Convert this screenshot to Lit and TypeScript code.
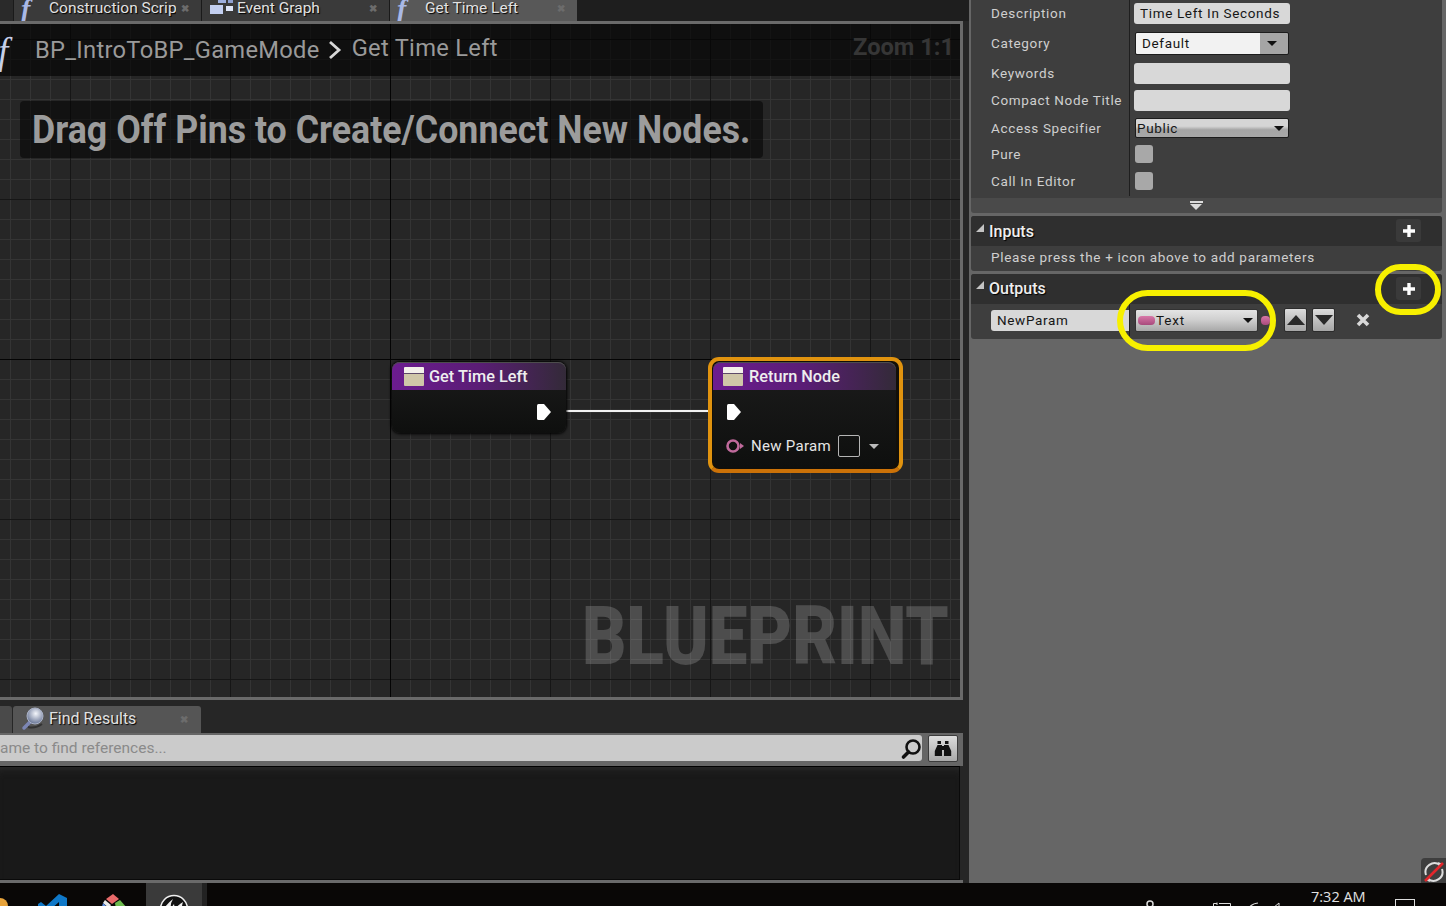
import { LitElement, html, css, svg } from 'lit';
import { customElement } from 'lit/decorators.js';

// little svg pieces, all drawn by hand
const graphIcon = svg`<svg class="tab-ico" width="24" height="18" viewBox="0 0 24 18">
  <rect x="8" y="0" width="8" height="5" fill="#9fb0de"/><rect x="18" y="0" width="5" height="5" fill="#8fa0d0"/>
  <rect x="0" y="7" width="13" height="9" fill="#c3cff0"/><rect x="16" y="8" width="7" height="5" fill="#dfe6f8"/></svg>`;

const lens = svg`<svg class="tab-ico" width="24" height="24" viewBox="0 0 24 24">
  <defs><radialGradient id="lg" cx="0.55" cy="0.35" r="0.7"><stop offset="0" stop-color="#f4f6fb"/><stop offset="1" stop-color="#5d6b8e"/></radialGradient></defs>
  <path d="M9 15 L3 21" stroke="#7c86b4" stroke-width="3.5" stroke-linecap="round"/>
  <circle cx="14" cy="9" r="8" fill="url(#lg)" stroke="#aab2c6" stroke-width="1"/>
  <path d="M7 20 Q14 22 21 17" stroke="#1c1c1c" stroke-width="2" fill="none" opacity=".6"/></svg>`;

const searchGlass = svg`<svg width="22" height="22" viewBox="0 0 22 22">
  <circle cx="13" cy="9" r="6.5" fill="none" stroke="#111" stroke-width="2.6"/>
  <path d="M8.5 14 L3.5 19" stroke="#111" stroke-width="3.6" stroke-linecap="round"/></svg>`;

const binoculars = svg`<svg width="18" height="18" viewBox="0 0 18 18" fill="#111">
  <rect x="3.5" y="1" width="3.5" height="3"/><rect x="11" y="1" width="3.5" height="3"/>
  <path d="M3.5 5 H8 V16 H0.8 V11 Z"/><path d="M10 5 H14.5 L17.2 11 V16 H10 Z"/><rect x="8" y="6" width="2" height="4"/></svg>`;

const execPin = svg`<svg class="pin" width="16" height="18" viewBox="0 0 16 18">
  <path d="M2.5 1 H8 L15 9 L8 17 H2.5 Q1 17 1 15.5 V2.500 Q1 1 2.500 1 Z" fill="#fff"/></svg>`;

const paramPin = svg`<svg width="20" height="16" viewBox="0 0 20 16">
  <circle cx="8" cy="8" r="5.500" fill="none" stroke="#c06a9c" stroke-width="2.600"/>
  <path d="M15 5 L19 8 L15 11 Z" fill="#c06a9c"/></svg>`;

const ueLogo = svg`<svg width="30" height="30" viewBox="0 0 30 30">
  <circle cx="15" cy="15" r="13.500" fill="#111" stroke="#eee" stroke-width="1.600"/>
  <path d="M6 13 Q10 8 14 5 Q11 10 12 14 L15 10 L16 15 Q20 10 24 8 Q22 14 23 20 L18 24 Q10 24 6 13 Z" fill="#eee"/></svg>`;

const vsCode = svg`<svg width="30" height="30" viewBox="0 0 30 30">
  <path d="M21 0 L29 4 V26 L21 30 L8 18 L3 22 L0 20 V10 L3 8 L8 12 Z M21 8 L13 15 L21 22 Z" fill="#0f78c8" fill-rule="evenodd"/></svg>`;

const pencil = svg`<svg width="28" height="30" viewBox="0 0 28 30">
  <path d="M6 5 L13 0 L19 5 L12 10 Z" fill="#e86a6a"/><path d="M5 6 L11 11 L9 14 L3 9 Z" fill="#e8e8e8"/>
  <path d="M15 9 L20 6 L27 14 L18 26 Z" fill="#6dbb4f"/><path d="M3 9 L9 15 L4 26 L0 20 Z" fill="#5b8ee6"/></svg>`;

const syncOff = svg`<svg width="24" height="24" viewBox="0 0 24 24">
  <path d="M4 15 A9 9 0 0 1 18 5" fill="none" stroke="#ddd" stroke-width="2"/><path d="M20 9 A9 9 0 0 1 6 19" fill="none" stroke="#ddd" stroke-width="2"/>
  <path d="M16 2 L21 4 L17 8 Z" fill="#ddd"/><path d="M8 22 L3 20 L7 16 Z" fill="#ddd"/>
  <path d="M3 21 L21 3" stroke="#e2262b" stroke-width="2.600"/></svg>`;

const trayPerson = svg`<svg width="14" height="12" viewBox="0 0 14 12"><circle cx="7" cy="5" r="3" fill="none" stroke="#ddd" stroke-width="1.500"/><path d="M1 12 Q7 5 13 12" fill="none" stroke="#ddd"/></svg>`;
const trayPower = svg`<svg width="18" height="8" viewBox="0 0 18 8"><path d="M0.500 8 V1.500 H4 M4 0.500 V3 M6 1.500 H17.500 V8" fill="none" stroke="#ddd"/></svg>`;
const trayWifi = svg`<svg width="12" height="8" viewBox="0 0 12 8"><path d="M1 8 Q3 2 11 1" fill="none" stroke="#ddd" stroke-width="1.200"/></svg>`;
const traySound = svg`<svg width="18" height="8" viewBox="0 0 18 8"><path d="M0 6 L6 1 V8" fill="none" stroke="#ddd"/><path d="M9 4 L11 8 M14 4 L16 8" stroke="#ddd"/></svg>`;

const plusIcon = svg`<svg width="14" height="14" viewBox="0 0 14 14"><path d="M7 1 V13 M1 7 H13" stroke="#fff" stroke-width="3.400"/></svg>`;

@customElement('app-root')
export class AppRoot extends LitElement {
  static styles = css`
    :host {
      display: block;
      width: 1446px;
      height: 906px;
      overflow: hidden;
      background: #262626;
      font-family: Roboto, "Liberation Sans", sans-serif;
    }
    .editor { display: flex; height: 883px; }
    .left { width: 969px; flex: none; display: flex; flex-direction: column; background: #262626; }

    /* document tabs */
    .doc-tabs { display: flex; height: 21px; padding-left: 13px; background: #2a2a2a; overflow: hidden; flex: none; }
    .doc-tabs .tail { flex: 1; background: #1e1e1e; }
    .tab {
      position: relative; width: 188px; flex: none; display: flex; align-items: center;
      background: #3a3a3a; border-left: 1px solid #1a1a1a; box-sizing: border-box;
      color: #e2e2e2; font-size: 15.500px; text-shadow: 1px 1px 1px #000; white-space: nowrap;
    }
    .tab.on { background: #585858; }
    .tab .lbl { margin-left: 35px; width: 127px; overflow: hidden; margin-top: -6px; flex: none; }
    .fn {
      position: absolute; left: 7px; top: -7px; font: italic 700 28px "Liberation Serif", serif;
      color: #a9b8e6; text-shadow: none;
    }
    .tab-ico { position: absolute; left: 8px; top: -2px; }
    .tab .x { color: #6c6c6c; font-size: 10px; font-weight: 700; margin: -5px 0 0 5px; text-shadow: none; }

    /* graph canvas */
    .graph {
      position: relative; height: 679px; margin-right: 6px; flex: none; box-sizing: border-box;
      border: solid #6a6a6a; border-width: 3px 3px 3px 0;
      background-color: #262626;
      overflow: hidden;
    }
    .lines { position: absolute; inset: 0; background-repeat: repeat; }
    .minor {
      background-image: linear-gradient(90deg, #343434 1px, transparent 1px), linear-gradient(#343434 1px, transparent 1px);
      background-size: 20px 20px; background-position: 10px 0, 0 15px;
    }
    .major {
      background-image: linear-gradient(90deg, #161616 1px, transparent 1px), linear-gradient(#161616 1px, transparent 1px);
      background-size: 160px 160px; background-position: 70px 0, 0 15px;
    }
    .strong {
      background-image: linear-gradient(90deg, #040404 1px, transparent 1px), linear-gradient(#040404 1px, transparent 1px);
      background-size: 640px 640px; background-position: 390px 0, 0 335px;
    }
    .crumb {
      position: relative; height: 52px; background: rgba(0, 0, 0, .6); display: flex; align-items: center;
      color: #9a9a9a; font-size: 23.700px; letter-spacing: .3px; white-space: nowrap;
    }
    .crumb .bf { position: absolute; left: -2px; top: 6px; font: italic 37px "Liberation Serif", serif; color: #c6cfe8; }
    .crumb .a { margin-left: 35px; }
    .crumb .chev { margin: 0 10px 0 8px; flex: none; }
    .crumb .b { margin-top: -4px; }
    .zoom { position: absolute; left: 853px; top: 9px; font-weight: 700; color: #363636; letter-spacing: 0; }
    .hint {
      position: relative; margin: 25px 0 0 20px; width: 743px; height: 57px; border-radius: 4px;
      background: rgba(0, 0, 0, .52); color: #9c9c9c; overflow: hidden;
    }
    .hint span {
      display: block; margin: 6px 0 0 12px; width: 900px; font-size: 38.500px; font-weight: 700; white-space: nowrap;
      transform: scaleX(.928); transform-origin: 0 0;
    }
    .mark {
      position: absolute; left: 582px; top: 567px; font-size: 82px; line-height: 90px; font-weight: 900; color: rgba(255, 255, 255, .18);
      white-space: nowrap; transform: scaleX(.84); transform-origin: 0 0;
    }

    /* nodes */
    .node {
      position: absolute; background: linear-gradient(#1c1c1c, #0e0f0e); border-radius: 8px;
      box-shadow: 0 0 3px 1px #000; color: #f0f0f0;
    }
    .node.get { left: 392px; top: 338px; width: 174px; height: 71px; }
    .sel {
      position: absolute; left: 708px; top: 333px; width: 195px; height: 116px; box-sizing: border-box;
      border: 4px solid #e0930f; border-bottom-color: #cc7208; border-radius: 11px; background: #120f08;
    }
    .node.ret { left: 1px; top: 1px; width: 183px; height: 106px; box-shadow: none; }
    .head {
      height: 28px; display: flex; align-items: center; gap: 5px; padding-left: 12px; box-sizing: border-box;
      border-radius: 8px 8px 0 0; font-size: 16.300px; font-weight: 500; color: #eee;
      background: linear-gradient(90deg, #6c1c90 0%, #5a1d75 50%, #332a38 100%);
      box-shadow: inset 0 1px 0 #4d4d4d;
    }
    .ret .head { padding-left: 10px; gap: 6px; }
    .cube { width: 20px; height: 19px; flex: none; border-radius: 1px; background: linear-gradient(#f3f0ea 0 6px, #5d4a68 6px 7px, #cfc6a8 7px); }
    .node .pin { position: absolute; }
    .get .pin { left: 144px; top: 41px; }
    .ret .pin { left: 13px; top: 41px; }
    .param { position: absolute; left: 12px; top: 73px; display: flex; align-items: center; font-size: 15px; color: #e6e6e6; letter-spacing: .3px; }
    .param .t { margin-left: 6px; }
    .swatch { width: 20px; height: 20px; border: 1px solid #b5b5b5; border-radius: 2px; margin-left: 7px; }
    .tri { width: 0; height: 0; margin-left: 9px; border: 5px solid transparent; border-top-color: #bbb; border-bottom: 0; }
    .wire { position: absolute; left: 566px; top: 386px; width: 142px; height: 2px; background: #f3f3f3; box-shadow: 0 0 1px #888; }

    /* bottom tab + search */
    .low-tabs { display: flex; height: 27px; margin-top: 6px; flex: none; }
    .stub { width: 12px; background: #4a4a4a; border-radius: 0 3px 0 0; }
    .tab.find { height: 27px; margin-left: 1px; border-left: 0; border-radius: 3px 3px 0 0; background: #555; font-size: 16px; }
    .tab.find .lbl { margin: -2px 0 0 36px; width: 128px; }
    .tab.find .tab-ico { left: 8px; top: 1px; }
    .tab.find .x { margin: 0 0 0 3px; }
    .search {
      height: 33px; margin-right: 6px; flex: none; background: #666; display: flex; align-items: flex-start; box-sizing: border-box; padding-top: 2px;
    }
    .sfield {
      width: 922px; height: 26px; flex: none; background: #cbcbcb; border-radius: 0 3px 3px 0; display: flex; align-items: center;
      justify-content: space-between; color: #8a8a8a; font-size: 15.500px; box-sizing: border-box;
    }
    .sfield svg { display: block; margin-top: 1px; }
    .sbtn {
      width: 28px; height: 25px; margin-left: 6px; flex: none; display: flex; align-items: center; justify-content: center;
      border: 1px solid #3c3c3c; border-radius: 2px; background: linear-gradient(#dcdcdc, #a9a9a9);
    }
    .results { flex: 1; margin-right: 9px; background: #191919; border: 1px solid #0a0a0a; border-top-color: #000; border-left: 0; box-shadow: inset 0 8px 8px -6px #2a2a2a; }
    .foot { height: 3px; flex: none; margin-right: 6px; background: #6a6a6a; }

    /* details panel */
    .right { flex: 1; background: #666; position: relative; padding-left: 2px; }
    .details { width: 471px; position: relative; background: #3e3e3e; height: 198px; box-sizing: border-box; }
    .grid { display: grid; grid-template-columns: 159px 1fr; grid-template-rows: 26px 34px 26px 28px 28px 24px 30px; }
    .lab { display: flex; align-items: center; padding-left: 20px; color: #cfcfcf; font-size: 13.500px; letter-spacing: .65px; white-space: nowrap; border-right: 1px solid #1e1e1e; }
    .val { display: flex; align-items: center; padding-left: 4px; }
    .inp { width: 156px; height: 21px; box-sizing: border-box; background: #d8d8d8; border-radius: 3px; padding-left: 6px; color: #161616; font-size: 13.500px; letter-spacing: .65px; line-height: 21px; }
    .dd {
      width: 154px; height: 23px; margin-left: 1px; box-sizing: border-box; border: 1px solid #1c1c1c; border-radius: 2px; display: flex; align-items: center; color: #161616;
      font-size: 13.500px; letter-spacing: .65px; position: relative; padding-left: 6px;
      background: linear-gradient(90deg, #f2f2f2 0 124px, #a5a5a5 124px);
    }
    .dd.pub { height: 20px; padding-left: 1px; background: linear-gradient(#d5d5d5, #d5d5d5 40%, #a5a5a5 60%, #a8a8a8); }
    .caret { position: absolute; right: 11px; top: 8px; width: 0; height: 0; border: 5px solid transparent; border-top: 5px solid #111; border-bottom: 0; }
    .pub .caret { right: 4px; top: 7px; }
    .chk { width: 18px; height: 18px; margin-left: 1px; border-radius: 3px; background: #a8a8a8; }
    .more { width: 471px; height: 15px; background: #4a4a4a; border-radius: 0 0 3px 3px; display: flex; flex-direction: column; align-items: center; padding: 3px 21px 0 0; box-sizing: border-box; }
    .more i { display: block; width: 13px; height: 2px; background: #ddd; margin-bottom: 1px; }
    .more b { display: block; width: 0; height: 0; border: 6px solid transparent; border-top: 6px solid #ddd; border-bottom: 0; }
    .sect { width: 471px; margin-top: 3px; border-radius: 3px; overflow: hidden; background: #3e3e3e; }
    .sect-h { height: 30px; background: #2f2f2f; display: flex; align-items: center; color: #eee; font-size: 16px; font-weight: 500; text-shadow: 1px 1px 1px #000; position: relative; }
    .sect-h.outs { padding-bottom: 2px; box-sizing: border-box; }
    .sect-h .arr { width: 0; height: 0; margin: -6px 5px 0 5px; border-style: solid; border-width: 0 0 8px 8px; border-color: transparent transparent #c4c4c4 transparent; }
    .plus { position: absolute; left: 425px; top: 3px; width: 25px; height: 23px; background: #3a3a3a; border-radius: 3px; display: flex; align-items: center; justify-content: center; }
    .plus svg { display: block; }
    .note { height: 25px; display: flex; align-items: center; padding: 0 0 3px 20px; box-sizing: border-box; color: #cfcfcf; font-size: 13.500px; letter-spacing: .68px; }
    .outrow { height: 35px; display: flex; align-items: center; position: relative; padding-bottom: 3px; box-sizing: border-box; }
    .outrow .name { width: 138px; margin-left: 20px; height: 21px; flex: none; border-radius: 3px 0 0 3px; background: #d8d8d8; color: #161616; font-size: 13.500px; letter-spacing: .65px; line-height: 21px; padding-left: 6px; box-sizing: border-box; }
    .outrow .sep { width: 1px; height: 100%; background: #1e1e1e; margin-left: 0; flex: none; }
    .type {
      width: 123px; height: 23px; margin-left: 5px; box-sizing: border-box; position: relative; flex: none; display: flex; align-items: center; padding-left: 2px; gap: 1px;
      border: 1px solid #333; border-radius: 2px; background: linear-gradient(#e4e4e4, #d0d0d0 45%, #a8a8a8); color: #161616; font-size: 13.500px; letter-spacing: .85px;
    }
    .pill { width: 17px; height: 9px; border-radius: 4px; background: linear-gradient(#d877a8, #a84a7c); flex: none; }
    .type .caret { right: 4px; top: 8px; }
    .pill.out { width: 9px; margin-left: 3px; margin-right: 14px; }
    .mv { width: 23px; height: 24px; box-sizing: border-box; border: 1px solid #2c2c2c; border-radius: 2px; background: linear-gradient(#dcdcdc, #a6a6a6); display: flex; align-items: center; justify-content: center; flex: none; margin-right: 5px; }
    .up { width: 0; height: 0; border: 9px solid transparent; border-bottom: 10px solid #2a2a2a; border-top: 0; }
    .dn { width: 0; height: 0; border: 9px solid transparent; border-top: 10px solid #2a2a2a; border-bottom: 0; }
    .del { margin-left: 16px; display: block; }
    .ring { position: absolute; border: 6px solid #f7f000; box-sizing: border-box; pointer-events: none; }
    .ring.a { left: 148px; top: 290px; width: 159px; height: 61px; border-radius: 32px; }
    .ring.b { left: 406px; top: 264px; width: 66px; height: 51px; border-radius: 26px; }
    .sync { position: absolute; right: 0; bottom: 0; width: 25px; height: 25px; background: #3e3e3e; border-radius: 4px 0 0 0; }
    .sync svg { display: block; margin: 2px 0 0 1px; }

    /* windows taskbar */
    .bar { height: 23px; background: #090706; display: flex; align-items: flex-start; overflow: hidden; position: relative; }
    .bar .app { flex: none; display: block; margin-top: 11px; }
    .orange { width: 8px; height: 14px; margin-top: 15px; background: #e8a33a; border-radius: 0 8px 0 0; flex: none; }
    .vs { margin-left: 30px; }
    .pen { margin-left: 32px; }
    .active { width: 56px; height: 23px; margin-left: 18px; flex: none; background: #3a3a3a; display: flex; justify-content: center; }
    .active svg { margin-top: 11px; flex: none; }
    .end { width: 5px; height: 23px; background: #222; flex: none; }
    .tray { margin-left: auto; display: flex; align-items: flex-start; color: #e2e2e2; }
    .tray svg { display: block; flex: none; }
    .t-person { margin-top: 16px; }
    .t-power { margin: 19px 0 0 56px; }
    .t-wifi { margin: 19px 0 0 16px; }
    .t-sound { margin: 19px 0 0 14px; }
    .time { font: 14.500px "Open Sans", "Liberation Sans", sans-serif; line-height: 20px; margin: 4px 0 0 20px; width: 54px; white-space: nowrap; }
    .notif { width: 20px; height: 10px; border: 1px solid #ddd; box-sizing: border-box; margin: 16px 31px 0 30px; border-bottom: 0; }
  `;

  render() {
    return html`
      <div class="editor">
        <div class="left">
          <div class="doc-tabs">
            <div class="tab"><span class="fn">f</span><span class="lbl">Construction Scrip</span><span class="x">✖</span></div>
            <div class="tab">${graphIcon}<span class="lbl">Event Graph</span><span class="x">✖</span></div>
            <div class="tab on"><span class="fn">f</span><span class="lbl">Get Time Left</span><span class="x">✖</span></div>
            <div class="tail"></div>
          </div>
          <div class="graph">
            <div class="lines minor"></div>
            <div class="lines major"></div>
            <div class="lines strong"></div>
            <div class="crumb">
              <span class="bf">f</span>
              <span class="a">BP_IntroToBP_GameMode</span>
              <svg class="chev" width="14" height="20" viewBox="0 0 14 20"><path d="M2 2 L11 10 L2 18" fill="none" stroke="#d8d8d8" stroke-width="2.800"/></svg>
              <span class="b">Get Time Left</span>
              <span class="zoom">Zoom 1:1</span>
            </div>
            <div class="hint"><span>Drag Off Pins to Create/Connect New Nodes.</span></div>
            <div class="mark">BLUEPRINT</div>
            <div class="wire"></div>
            <div class="node get">
              <div class="head"><span class="cube"></span>Get Time Left</div>
              ${execPin}
            </div>
            <div class="sel">
              <div class="node ret">
                <div class="head"><span class="cube"></span>Return Node</div>
                ${execPin}
                <div class="param">${paramPin}<span class="t">New Param</span><span class="swatch"></span><span class="tri"></span></div>
              </div>
            </div>
          </div>
          <div class="low-tabs">
            <div class="stub"></div>
            <div class="tab find">${lens}<span class="lbl">Find Results</span><span class="x">✖</span></div>
          </div>
          <div class="search">
            <div class="sfield"><span>ame to find references...</span>${searchGlass}</div>
            <div class="sbtn">${binoculars}</div>
          </div>
          <div class="results"></div>
          <div class="foot"></div>
        </div>

        <div class="right">
          <div class="details">
            <div class="grid">
              <div class="lab">Description</div><div class="val"><div class="inp">Time Left In Seconds</div></div>
              <div class="lab">Category</div><div class="val"><div class="dd">Default<span class="caret"></span></div></div>
              <div class="lab">Keywords</div><div class="val"><div class="inp"></div></div>
              <div class="lab">Compact Node Title</div><div class="val"><div class="inp"></div></div>
              <div class="lab">Access Specifier</div><div class="val"><div class="dd pub">Public<span class="caret"></span></div></div>
              <div class="lab">Pure</div><div class="val"><div class="chk"></div></div>
              <div class="lab">Call In Editor</div><div class="val"><div class="chk"></div></div>
            </div>
          </div>
          <div class="more"><i></i><b></b></div>
          <div class="sect">
            <div class="sect-h"><span class="arr"></span>Inputs<span class="plus">${plusIcon}</span></div>
            <div class="note">Please press the + icon above to add parameters</div>
          </div>
          <div class="sect">
            <div class="sect-h outs"><span class="arr"></span>Outputs<span class="plus">${plusIcon}</span></div>
            <div class="outrow">
              <div class="name">NewParam</div><div class="sep"></div>
              <div class="type"><span class="pill"></span>Text<span class="caret"></span></div>
              <span class="pill out"></span>
              <span class="mv"><span class="up"></span></span>
              <span class="mv"><span class="dn"></span></span>
              <svg class="del" width="14" height="14" viewBox="0 0 14 14"><path d="M2 2 L12 12 M12 2 L2 12" stroke="#d8d8d8" stroke-width="3.600"/></svg>
            </div>
          </div>
          <div class="ring a"></div>
          <div class="ring b"></div>
          <div class="sync">${syncOff}</div>
        </div>
      </div>
      <div class="bar">
        <span class="orange"></span>
        <span class="app vs">${vsCode}</span>
        <span class="app pen">${pencil}</span>
        <div class="active">${ueLogo}</div>
        <div class="end"></div>
        <div class="tray">
          <span class="t-person">${trayPerson}</span>
          <span class="t-power">${trayPower}</span>
          <span class="t-wifi">${trayWifi}</span>
          <span class="t-sound">${traySound}</span>
          <span class="time">7:32 AM</span>
          <span class="notif"></span>
        </div>
      </div>
    `;
  }
}
